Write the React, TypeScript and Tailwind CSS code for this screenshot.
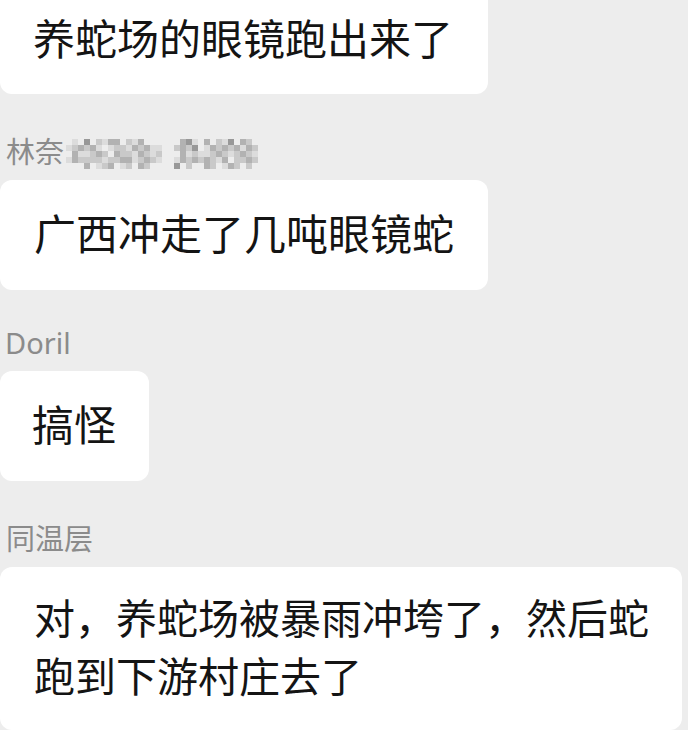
import React from "react";

const mosaicRows = [
  "01040213302130000003410302140320",
  "12323101221323110023240132323132",
  "03112320322132120003121123212321",
  "13222212233123210013232321302232",
  "00030123012032000040200320132020",
];

const shade: Record<string, string> = {
  "0": "transparent",
  "1": "#dcdcdc",
  "2": "#c9c9c9",
  "3": "#b2b2b2",
  "4": "#989898",
};

function Mosaic() {
  return (
    <div className="mt-[7px] ml-[2px] flex flex-col">
      {mosaicRows.map((row, r) => (
        <div key={r} className="flex">
          {row.split("").map((c, i) => (
            <div key={i} className="h-[6px] w-[6px]" style={{ backgroundColor: shade[c] }} />
          ))}
        </div>
      ))}
    </div>
  );
}

export default function App() {
  return (
    <div className="h-[730px] w-[688px] overflow-hidden bg-[#ededed] font-['Noto_Sans','Noto_Sans_CJK_SC',sans-serif] text-[#141414]">
      {/* message 1 */}
      <div className="mt-[-15px] w-fit rounded-[12px] bg-white pl-[33px] pr-[35px] pt-[25px] pb-[26px] text-[42px] leading-[58px]">
        养蛇场的眼镜跑出来了
      </div>

      {/* message 2 */}
      <div className="mt-[38px]">
        <div className="mb-[8px] flex items-start pl-[6px] text-[29px] leading-[40px] text-[#8b8b8b]">
          <span>林奈</span>
          <Mosaic />
        </div>
        <div className="w-fit rounded-[12px] bg-white pl-[34px] pr-[34px] pt-[25px] pb-[27px] text-[42px] leading-[58px]">
          广西冲走了几吨眼镜蛇
        </div>
      </div>

      {/* message 3 */}
      <div className="mt-[33px]">
        <div className="mb-[8px] pl-[5px] text-[29px] leading-[40px] text-[#8b8b8b]">Doril</div>
        <div className="w-fit rounded-[12px] bg-white pl-[32px] pr-[33px] pt-[25px] pb-[27px] text-[42px] leading-[58px]">
          搞怪
        </div>
      </div>

      {/* message 4 */}
      <div className="mt-[38px]">
        <div className="mb-[8px] pl-[6px] text-[29px] leading-[40px] text-[#8b8b8b]">同温层</div>
        <div className="w-[682px] rounded-[12px] bg-white pl-[34px] pr-[20px] pt-[22px] pb-[25px] text-[41px] leading-[58px]">
          对，养蛇场被暴雨冲垮了，然后蛇
          <br />
          跑到下游村庄去了
        </div>
      </div>
    </div>
  );
}
